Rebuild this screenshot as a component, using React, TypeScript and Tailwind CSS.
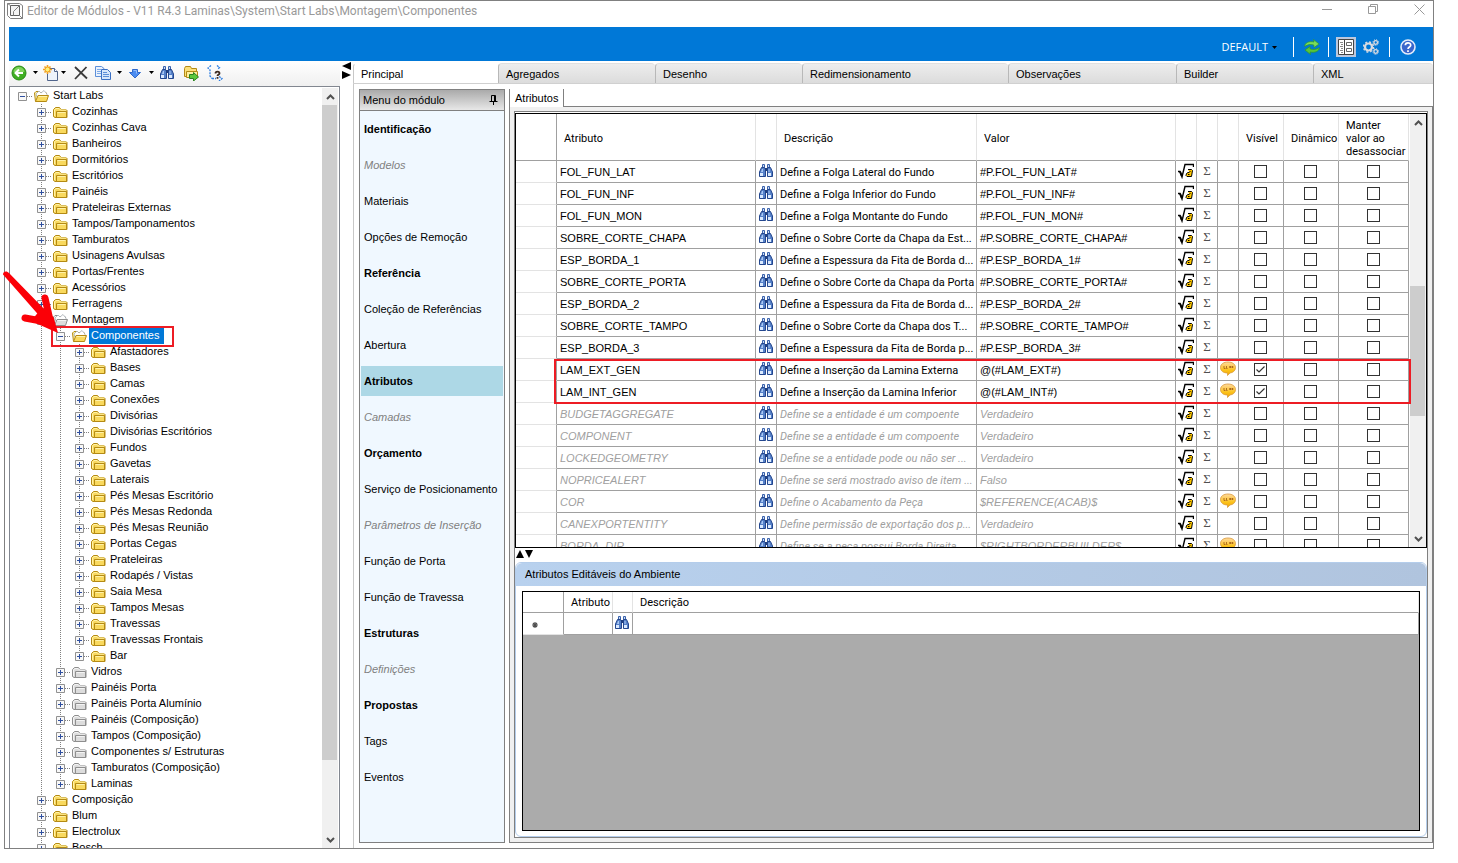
import { useState } from "react";
import type { ReactNode } from "react";

type Tone = "yellow" | "gray";

interface TreeNode {
	label: string;
	level: number;
	tone?: Tone;
	open?: boolean;
	last?: boolean;
}

interface MenuEntry {
	label: string;
	kind?: "group" | "disabled";
}

interface Attribute {
	name: string;
	description: string;
	value: string;
	muted?: boolean;
	note?: boolean;
	visible?: boolean;
}

const node = (level: number, tone: Tone = "yellow") => (label: string): TreeNode => ({
	label,
	level,
	tone,
});

const TREE: TreeNode[] = [
	{ label: "Start Labs", level: 0, open: true },
	...[
		"Cozinhas",
		"Cozinhas Cava",
		"Banheiros",
		"Dormitórios",
		"Escritórios",
		"Painéis",
		"Prateleiras Externas",
		"Tampos/Tamponamentos",
		"Tamburatos",
		"Usinagens Avulsas",
		"Portas/Frentes",
		"Acessórios",
		"Ferragens",
	].map(node(1)),
	{ label: "Montagem", level: 1, tone: "gray", open: true },
	{ label: "Componentes", level: 2, open: true },
	...[
		"Afastadores",
		"Bases",
		"Camas",
		"Conexões",
		"Divisórias",
		"Divisórias Escritórios",
		"Fundos",
		"Gavetas",
		"Laterais",
		"Pés Mesas Escritório",
		"Pés Mesas Redonda",
		"Pés Mesas Reunião",
		"Portas Cegas",
		"Prateleiras",
		"Rodapés / Vistas",
		"Saia Mesa",
		"Tampos Mesas",
		"Travessas",
		"Travessas Frontais",
	].map(node(3)),
	{ label: "Bar", level: 3, last: true },
	...[
		"Vidros",
		"Painéis Porta",
		"Painéis Porta Alumínio",
		"Painéis (Composição)",
		"Tampos (Composição)",
		"Componentes s/ Estruturas",
		"Tamburatos (Composição)",
	].map(node(2, "gray")),
	{ label: "Laminas", level: 2, last: true },
	...["Composição", "Blum", "Electrolux", "Bosch"].map(node(1)),
];

const MENU: MenuEntry[] = [
	{ label: "Identificação", kind: "group" },
	{ label: "Modelos", kind: "disabled" },
	{ label: "Materiais" },
	{ label: "Opções de Remoção" },
	{ label: "Referência", kind: "group" },
	{ label: "Coleção de Referências" },
	{ label: "Abertura" },
	{ label: "Atributos", kind: "group" },
	{ label: "Camadas", kind: "disabled" },
	{ label: "Orçamento", kind: "group" },
	{ label: "Serviço de Posicionamento" },
	{ label: "Parâmetros de Inserção", kind: "disabled" },
	{ label: "Função de Porta" },
	{ label: "Função de Travessa" },
	{ label: "Estruturas", kind: "group" },
	{ label: "Definições", kind: "disabled" },
	{ label: "Propostas", kind: "group" },
	{ label: "Tags" },
	{ label: "Eventos" },
];

const TABS = [
	{ label: "Principal", width: "w-[145px]" },
	{ label: "Agregados", width: "w-[157px]" },
	{ label: "Desenho", width: "w-[147px]" },
	{ label: "Redimensionamento", width: "w-[206px]" },
	{ label: "Observações", width: "w-[168px]" },
	{ label: "Builder", width: "w-[137px]" },
	{ label: "XML", width: "flex-1" },
];

const ATTRIBUTES: Attribute[] = [
	{ name: "FOL_FUN_LAT", description: "Define a Folga Lateral do Fundo", value: "#P.FOL_FUN_LAT#" },
	{ name: "FOL_FUN_INF", description: "Define a Folga Inferior do Fundo", value: "#P.FOL_FUN_INF#" },
	{ name: "FOL_FUN_MON", description: "Define a Folga Montante do Fundo", value: "#P.FOL_FUN_MON#" },
	{ name: "SOBRE_CORTE_CHAPA", description: "Define o Sobre Corte da Chapa da Est...", value: "#P.SOBRE_CORTE_CHAPA#" },
	{ name: "ESP_BORDA_1", description: "Define a Espessura da Fita de Borda d...", value: "#P.ESP_BORDA_1#" },
	{ name: "SOBRE_CORTE_PORTA", description: "Define o Sobre Corte da Chapa da Porta", value: "#P.SOBRE_CORTE_PORTA#" },
	{ name: "ESP_BORDA_2", description: "Define a Espessura da Fita de Borda d...", value: "#P.ESP_BORDA_2#" },
	{ name: "SOBRE_CORTE_TAMPO", description: "Define o Sobre Corte da Chapa dos T...", value: "#P.SOBRE_CORTE_TAMPO#" },
	{ name: "ESP_BORDA_3", description: "Define a Espessura da Fita de Borda p...", value: "#P.ESP_BORDA_3#" },
	{ name: "LAM_EXT_GEN", description: "Define a Inserção da Lamina Externa", value: "@(#LAM_EXT#)", note: true, visible: true },
	{ name: "LAM_INT_GEN", description: "Define a Inserção da Lamina Inferior", value: "@(#LAM_INT#)", note: true, visible: true },
	{ name: "BUDGETAGGREGATE", description: "Define se a entidade é um compoente", value: "Verdadeiro", muted: true },
	{ name: "COMPONENT", description: "Define se a entidade é um compoente", value: "Verdadeiro", muted: true },
	{ name: "LOCKEDGEOMETRY", description: "Define se a entidade pode ou não ser ...", value: "Verdadeiro", muted: true },
	{ name: "NOPRICEALERT", description: "Define se será mostrado aviso de item ...", value: "Falso", muted: true },
	{ name: "COR", description: "Define o Acabamento da Peça", value: "$REFERENCE(ACAB)$", muted: true, note: true },
	{ name: "CANEXPORTENTITY", description: "Define permissão de exportação dos p...", value: "Verdadeiro", muted: true },
	{ name: "BORDA_DIR", description: "Define se a peça possui Borda Direita", value: "$RIGHTBORDERBUILDER$", muted: true, note: true },
];

/* ---------- icons ---------- */

function Binoculars() {
	return (
		<svg width="16" height="16" viewBox="0 0 16 16" className="block">
			<path d="M4.500 1.500h2v3h-2zM9.500 1.500h2v3h-2z" fill="#c9daf4" stroke="#3a62ac" />
			<path d="M3.500 4.500h3l1 2v7h-6V9z" fill="#5580c8" stroke="#23468e" />
			<path d="M9.500 4.500h3l2 4.500v4.500h-5z" fill="#5580c8" stroke="#23468e" />
			<path d="M7 5h2v3H7z" fill="#1f3f80" />
			<path d="M2 10h3v3H2zM10 10h3v3h-3z" fill="#dcebff" />
			<path d="M4 6h1v3H3zM10.500 6h1v3h-1z" fill="#a9c8f4" />
		</svg>
	);
}

function Folder({ tone = "yellow", open }: { tone?: Tone; open?: boolean }) {
	const stroke = tone === "yellow" ? "#b48a14" : "#8e8e8e";
	const fill = tone === "yellow" ? "#f9d95e" : "#dcdcdc";
	const light = tone === "yellow" ? "#fff2a8" : "#f4f4f4";
	return (
		<svg width="19" height="16" viewBox="0 0 19 16" className="block shrink-0">
			{open ? (
				<>
					<path d="M3.500 13.500 2.500 5l1.500-1.500h3l1 1.500h6.500v3" fill={light} stroke={stroke} />
					<path d="m4 6 3-3 2 2 3-2.500 3 3.500v3H5z" fill="#fff" stroke="#9aa0a8" strokeWidth=".7" />
					<path d="M3.500 13.500 6 7.500h10.500l-2 6z" fill={fill} stroke={stroke} strokeLinejoin="round" />
					<path d="M6.500 8.500h8.500" stroke={light} />
				</>
			) : (
				<>
					<path d="M2.500 12.500v-7l2-2h4l1.500 2h5l1 1v7h-12z" fill={fill} stroke={stroke} strokeLinejoin="round" />
					<path d="M3.500 12V6l1.500-1.500h3l1.500 1.500H15" fill="none" stroke={light} />
					<path d="M5.500 7.500h10v6h-10z" fill={fill} stroke={stroke} />
					<path d="M6.500 8.500h8" stroke={light} />
				</>
			)}
		</svg>
	);
}

function RootIcon() {
	return (
		<svg width="16" height="16" viewBox="0 0 16 16" className="block">
			<path d="M0 8.500h2L4 14l3-12.500h8.500V4" fill="none" stroke="#000" strokeWidth="1.400" />
			<path d="m2 8.500 1.800 4.500" stroke="#000" strokeWidth="2" />
			<path d="M10 6.500h3.500l1 1-1 6H9l-1-1 .5-2 1.500-1h1.500" fill="#ffc800" stroke="#000" strokeWidth="1" />
			<path d="M10 11.500h1.500M11.500 8.500h1" stroke="#000" />
		</svg>
	);
}

function NoteIcon() {
	return (
		<svg width="16" height="16" viewBox="0 0 16 16" className="block">
			<defs>
				<linearGradient id="note" x1="0" y1="0" x2="0" y2="1">
					<stop offset="0" stopColor="#ffd9a0" />
					<stop offset=".6" stopColor="#fcc31c" />
					<stop offset="1" stopColor="#f0a800" />
				</linearGradient>
			</defs>
			<path
				d="M8 1c4.300 0 7.500 2.200 7.500 5.500S12.800 11.700 10 12l-2.500 2.500L7.500 12C3.500 12 .5 10 .5 6.500S3.700 1 8 1z"
				fill="url(#note)"
				stroke="#d99a3c"
				strokeWidth=".8"
			/>
			<path d="M4 5v2.500h1.500M6.500 5v2.500h1M9.500 5.500H11v1H9.500zM12 5.500h1v1h-1z" fill="none" stroke="#a8641c" strokeWidth=".9" />
		</svg>
	);
}

function Caret() {
	return (
		<svg width="5" height="3" viewBox="0 0 5 3">
			<path d="M0 0h5L2.500 3z" fill="#000" />
		</svg>
	);
}

function BackIcon() {
	return (
		<svg width="16" height="16" viewBox="0 0 16 16">
			<circle cx="8" cy="8" r="7" fill="#3fae22" stroke="#2a8a16" />
			<path d="M2.500 7a5.500 5 0 0 1 11 0z" fill="#7fd45c" />
			<path d="M12 8H5M8 4.500 4.500 8 8 11.500" fill="none" stroke="#fff" strokeWidth="2" />
		</svg>
	);
}

function NewIcon() {
	return (
		<svg width="16" height="16" viewBox="0 0 16 16" className="shrink-0">
			<path d="M4.500 3.500h7l3 3v9h-10z" fill="#edf3fb" stroke="#51658c" />
			<path d="M11.500 3.500v3h3" fill="#fff" stroke="#51658c" />
			<path d="M4.500 0v9M0 4.500h9M1.500 1.500l6 6M7.500 1.500l-6 6" stroke="#f4a020" strokeWidth="1.600" />
			<circle cx="4.500" cy="4.500" r="2.500" fill="#fff27a" stroke="#f0a020" />
		</svg>
	);
}

function DeleteIcon() {
	return (
		<svg width="16" height="16" viewBox="0 0 16 16">
			<path d="m2 2 12 11.500M13.500 2 2 14" stroke="#3a3a3a" strokeWidth="1.800" />
		</svg>
	);
}

function CopyIcon() {
	return (
		<svg width="16" height="16" viewBox="0 0 16 16">
			<path d="M.5 1.500h6l2.500 2v8H.5z" fill="#eaf2fd" stroke="#5d8fd8" />
			<path d="M2 4.500h4M2 6.500h4M2 8.500h4" stroke="#7eaae6" />
			<path d="M6.500 4.500h6l3 3v7h-9z" fill="#d6e6fb" stroke="#3b70c4" />
			<path d="M8 7.500h4M8 9.500h6M8 11.500h6" stroke="#5d8fd8" />
		</svg>
	);
}

function DownIcon() {
	return (
		<svg width="16" height="16" viewBox="0 0 16 16">
			<path d="M5.500 4.500h5v3h3L8 13 2.500 7.500h3z" fill="#4c8cf0" stroke="#2f68cc" />
			<path d="M6.500 5.500h3v3" fill="none" stroke="#93bcfa" />
		</svg>
	);
}

function FolderGoIcon() {
	return (
		<svg width="16" height="16" viewBox="0 0 16 16">
			<path d="M1.500 11.500v-8l1-2h5l1 2h5v8z" fill="#fbe07a" stroke="#b48a14" />
			<path d="M3.500 6.500h11v6h-11z" fill="#fff0a0" stroke="#b48a14" />
			<path d="M6.500 9.500h4v-2L15.500 12l-5 4v-2.500h-4z" fill="#5cc83c" stroke="#2a8420" />
		</svg>
	);
}

function QueryIcon() {
	return (
		<svg width="16" height="16" viewBox="0 0 16 16">
			<path
				d="M4 .5 1 3l2 2v6l2 2.500M5 13.500h4M10 .5l2.500 2-2 2M12 11.500l3 2-3 2.500"
				fill="none"
				stroke="#2d7de0"
				strokeWidth="1.300"
				strokeDasharray="2 1"
			/>
			<path d="M8.500 8.500c0-2.500 4-2.500 4 0 0 1.300-2 1-2 2.500M10.500 12v1.800" fill="none" stroke="#3c2a20" strokeWidth="1.800" />
		</svg>
	);
}

function RefreshIcon() {
	return (
		<svg width="16" height="16" viewBox="0 0 16 16" className="shrink-0">
			<path d="M.5 7.500C1 3.500 5 2 10 3L9.500.500 15 5l-5 3.500L9.800 6C6 5 4 5.500.5 7.500z" fill="#7bdc5a" stroke="#2e9a2a" strokeWidth=".7" />
			<path d="M15.500 8.500c-.5 4-4.500 5.500-9.500 4.500l.5 2.500L1 11l5-3.500.2 2.500c3.800 1 5.800.5 9.300-1.500z" fill="#58c43c" stroke="#2e9a2a" strokeWidth=".7" />
		</svg>
	);
}

function FormIcon() {
	return (
		<svg width="16" height="16" viewBox="0 0 16 16">
			<path d="M.5.500h15v15H.5z" fill="#fff" stroke="#444" />
			<path d="M6.500.500v15" stroke="#444" />
			<path d="M8.500 3.500h5v3h-5zM8.500 9.500h5v3h-5z" fill="#fff" stroke="#666" />
			<path d="M2 3.500h3M3 5.500h2M2 7.500h3M3 9.500h2M2 11.500h3M3 13.500h2" stroke="#888" />
		</svg>
	);
}

function GearsIcon() {
	return (
		<svg width="16" height="16" viewBox="0 0 16 16" className="shrink-0">
			<circle cx="5.500" cy="8" r="3.500" fill="none" stroke="#dcdce0" strokeWidth="2.200" />
			<circle cx="5.500" cy="8" r="5" fill="none" stroke="#dcdce0" strokeWidth="1.400" strokeDasharray="2 1.927" />
			<circle cx="12.700" cy="3.500" r="1.800" fill="none" stroke="#dcdce0" strokeWidth="1.300" />
			<circle cx="12.700" cy="3.500" r="2.800" fill="none" stroke="#dcdce0" strokeDasharray="1.100 1.099" />
			<circle cx="12.700" cy="12.500" r="1.800" fill="none" stroke="#dcdce0" strokeWidth="1.300" />
			<circle cx="12.700" cy="12.500" r="2.800" fill="none" stroke="#dcdce0" strokeDasharray="1.100 1.099" />
		</svg>
	);
}

function HelpIcon() {
	return (
		<svg width="16" height="16" viewBox="0 0 16 16">
			<circle cx="8" cy="8" r="7" fill="#3a66cc" stroke="#e4ecfa" strokeWidth="1.600" />
			<path d="M5.300 6.300C5.300 3 10.700 3 10.700 6.200 10.700 8 8 8 8 10M8 11.200V13" fill="none" stroke="#fff" strokeWidth="1.700" />
		</svg>
	);
}

function ScrollArrow({ down }: { down?: boolean }) {
	return (
		<svg width="9" height="6" viewBox="0 0 9 6">
			<path d={down ? "m1 1 3.500 3.500L8 1" : "m1 5 3.500-3.500L8 5"} fill="none" stroke="#505050" strokeWidth="2" />
		</svg>
	);
}

/* ---------- shared parts ---------- */

function ToolButton({ label, children }: { label: string; children: ReactNode }) {
	return (
		<button type="button" aria-label={label} className="flex h-5 w-4 shrink-0 items-center justify-center">
			{children}
		</button>
	);
}

function CaretButton({ label, narrow }: { label: string; narrow?: boolean }) {
	return (
		<button
			type="button"
			aria-label={label}
			className={`flex h-5 shrink-0 items-center justify-center ${narrow ? "w-2" : "w-4"}`}
		>
			<Caret />
		</button>
	);
}

function ScrollBar({ thumb }: { thumb: string }) {
	return (
		<div className="flex w-4 shrink-0 flex-col bg-[#f0f0f0]">
			<button type="button" aria-label="Rolar para cima" className="flex h-[17px] shrink-0 items-center justify-center">
				<ScrollArrow />
			</button>
			<div className="min-h-0 flex-1">
				<div className={`w-[15px] bg-[#cdcdcd] ${thumb}`} />
			</div>
			<button type="button" aria-label="Rolar para baixo" className="flex h-[17px] shrink-0 items-center justify-center">
				<ScrollArrow down />
			</button>
		</div>
	);
}

function CheckBox({ label, defaultChecked }: { label: string; defaultChecked?: boolean }) {
	return (
		<span className="mx-auto grid size-[13px]">
			<input
				type="checkbox"
				aria-label={label}
				defaultChecked={defaultChecked}
				className="peer col-start-1 row-start-1 size-[13px] appearance-none border border-[#333] bg-white"
			/>
			<svg
				viewBox="0 0 13 13"
				className="pointer-events-none invisible col-start-1 row-start-1 size-[13px] peer-checked:visible"
			>
				<path d="m2.500 6.500 2.500 2.500 5.500-5.500" fill="none" stroke="#333" strokeWidth="1.200" />
			</svg>
		</span>
	);
}

/* ---------- tree ---------- */

function Guide({ line, box, last, open }: { line: boolean; box?: boolean; last?: boolean; open?: boolean }) {
	return (
		<svg width="19" height="16" viewBox="0 0 19 16" className="block shrink-0">
			{line && <path d={last ? "M9.500 0v8" : "M9.500 0v16"} stroke="#808080" strokeDasharray="1 1" />}
			{box && (
				<>
					<path d="M14 8.500h5" stroke="#808080" strokeDasharray="1 1" />
					<path d="M5.500 4.500h8v8h-8z" fill="#f8f8f8" stroke="#919191" />
					<path d={open ? "M7 8.500h5" : "M7 8.500h5M9.500 6v5"} stroke="#2f4f9f" />
				</>
			)}
		</svg>
	);
}

function TreeRow({ item, selected, onSelect }: { item: TreeNode; selected: boolean; onSelect: () => void }) {
	return (
		<li className="flex h-4">
			{Array.from({ length: item.level }, (_, i) => (
				<Guide key={i} line={i > 0} />
			))}
			<Guide line={item.level > 0} box last={item.last} open={item.open} />
			<Folder tone={item.tone} open={item.open} />
			<button
				type="button"
				onClick={onSelect}
				className={`h-4 whitespace-nowrap pr-1 pl-0.5 pb-0.5 leading-[14px] ${selected ? "bg-[#0078d7] text-white" : ""}`}
			>
				{item.label}
			</button>
		</li>
	);
}

function TreePanel() {
	const [selected, setSelected] = useState("Componentes");

	return (
		<aside className="relative flex w-[331px] shrink-0 flex-col">
			<div className="flex h-[25px] items-center bg-linear-to-b from-white to-[#f0f0f0] pl-0.5 pb-0.5">
				<ToolButton label="Voltar"><BackIcon /></ToolButton>
				<CaretButton label="Histórico" />
				<ToolButton label="Novo"><NewIcon /></ToolButton>
				<CaretButton label="Opções de novo" narrow />
				<div className="ml-1.5 flex gap-1.5">
					<ToolButton label="Excluir"><DeleteIcon /></ToolButton>
					<ToolButton label="Copiar"><CopyIcon /></ToolButton>
				</div>
				<CaretButton label="Opções de cópia" />
				<ToolButton label="Mover"><DownIcon /></ToolButton>
				<CaretButton label="Opções de mover" />
				<div className="flex gap-2">
					<ToolButton label="Procurar"><Binoculars /></ToolButton>
					<ToolButton label="Ir para pasta"><FolderGoIcon /></ToolButton>
					<ToolButton label="Consultar"><QueryIcon /></ToolButton>
				</div>
			</div>
			<div className="flex min-h-0 flex-1 border border-b-0 border-[#828790] bg-white pt-px pr-px">
				<ul className="min-w-0 flex-1 overflow-hidden pl-[3px]">
					{TREE.map((item) => (
						<TreeRow
							key={item.label}
							item={item}
							selected={selected === item.label}
							onSelect={() => setSelected(item.label)}
						/>
					))}
				</ul>
				<ScrollBar thumb="h-[655px]" />
			</div>
			{/* callout around the selected folder */}
			<div className="pointer-events-none absolute top-[265px] left-[42px] h-[21px] w-[123px] border-2 border-[#ed1c24]" />
			<svg
				width="60"
				height="66"
				viewBox="0 0 60 66"
				className="pointer-events-none absolute top-[208px] -left-2"
			>
				<path d="M2 5.500C2 2 6 1.500 8 4l40 41-6 6z" fill="#fb0007" />
				<path d="m44 29 5 22M24 49l22 4" fill="none" stroke="#fb0007" strokeWidth="7" strokeLinecap="round" />
				<path d="m40 40 12.500 8L57 64 30 52z" fill="#fb0007" />
			</svg>
		</aside>
	);
}

/* ---------- module menu ---------- */

function ModuleMenu() {
	const [active, setActive] = useState("Atributos");

	return (
		<nav className="flex w-[146px] shrink-0 flex-col border border-[#808080] bg-[#f0f8ff]">
			<div className="flex h-[21px] shrink-0 items-center justify-between border-b border-[#808080] bg-linear-to-b from-[#aaa] to-[#e8e8e8] pr-1.5 pl-[3px]">
				<span>Menu do módulo</span>
				<button type="button" aria-label="Fixar menu">
					<svg width="9" height="10" viewBox="0 0 9 10">
						<path d="M2.500 6V.5h4V6M.5 6.500h8M4.500 7v3M5.500 1v5" fill="none" stroke="#000" />
					</svg>
				</button>
			</div>
			<ul className="flex flex-col gap-1.5 pt-[3px]">
				{MENU.map((entry) => (
					<li key={entry.label} className="px-px">
						<button
							type="button"
							onClick={() => setActive(entry.label)}
							disabled={entry.kind === "disabled"}
							className={`flex h-[30px] w-full items-center pl-[3px] whitespace-nowrap ${
								entry.kind === "group" ? "font-bold" : ""
							} ${entry.kind === "disabled" ? "italic text-[#808080]" : ""} ${
								active === entry.label ? "bg-[#add8e6]" : ""
							}`}
						>
							{entry.label}
						</button>
					</li>
				))}
			</ul>
		</nav>
	);
}

/* ---------- grids ---------- */

const TABLE = "w-full table-fixed border-separate border-spacing-0";
const NARROW = "font-[Roboto,'Liberation_Sans',sans-serif]";
const TH = `${NARROW} border-r border-b border-r-[#e3e3e3] border-b-[#a0a0a0] pt-0.5 pl-[7px] text-left font-normal`;
const TD = "border-r border-b border-[#a0a0a0]";

function AttributeRow({ row }: { row: Attribute }) {
	const text = `${TD} whitespace-nowrap pl-[3px] ${row.muted ? "italic text-[#a0a0a0]" : ""}`;
	return (
		<tr className="h-[22px]">
			<td className="border-r border-b border-r-[#a0a0a0] border-b-[#e3e3e3]" />
			<td className={text}>{row.name}</td>
			<td className={`${TD} pb-0.5 pl-0.5`}>
				<button type="button" aria-label={`Procurar ${row.name}`} className="block">
					<Binoculars />
				</button>
			</td>
			<td className={`${text} ${NARROW} pt-0.5`}>{row.description}</td>
			<td className={text}>{row.value}</td>
			<td className={`${TD} pb-0.5 pl-0.5`}>
				<button type="button" aria-label={`Fórmula de ${row.name}`} className="block">
					<RootIcon />
				</button>
			</td>
			<td className={`${TD} pb-0.5 text-center font-['Liberation_Serif',serif] text-[13px] leading-4 text-[#505050]`}>Σ</td>
			<td className={`${TD} pb-0.5 pl-0.5`}>{row.note && <NoteIcon />}</td>
			<td className={`${TD} pr-0.5`}><CheckBox label="Visível" defaultChecked={row.visible} /></td>
			<td className={`${TD} pr-0.5`}><CheckBox label="Dinâmico" /></td>
			<td className={TD}><CheckBox label="Manter valor ao desassociar" /></td>
		</tr>
	);
}

function AttributeGrid() {
	return (
		<div className="relative flex h-[435px] shrink-0 border border-black bg-white">
			<div className="min-w-0 flex-1 overflow-hidden pr-px">
				<table className={TABLE}>
					<colgroup>
						<col className="w-[41px]" />
						<col className="w-[199px]" />
						<col className="w-[21px]" />
						<col className="w-[200px]" />
						<col />
						<col className="w-[21px]" />
						<col className="w-[21px]" />
						<col className="w-[21px]" />
						<col className="w-[45px]" />
						<col className="w-[55px]" />
						<col className="w-[70px]" />
					</colgroup>
					<thead>
						<tr className="h-[47px] leading-[13px]">
							<th className="border-r border-b border-[#a0a0a0]" />
							<th className={TH}>Atributo</th>
							<th className={TH} />
							<th className={TH}>Descrição</th>
							<th className={TH}>Valor</th>
							<th className={TH} />
							<th className={TH} />
							<th className={TH} />
							<th className={TH}>Visível</th>
							<th className={TH}>Dinâmico</th>
							<th className={TH}>
								Manter
								<br />
								valor ao
								<br />
								desassociar
							</th>
						</tr>
					</thead>
					<tbody>
						{ATTRIBUTES.map((row) => (
							<AttributeRow key={row.name} row={row} />
						))}
					</tbody>
				</table>
			</div>
			<ScrollBar thumb="mt-[155px] h-[130px]" />
			{/* callout around the two LAM_ rows */}
			<div className="pointer-events-none absolute top-[245px] right-[15px] left-[38px] h-[45px] border-2 border-[#ed1c24]" />
		</div>
	);
}

function EnvironmentGrid() {
	return (
		<section className="flex min-h-0 flex-1 flex-col rounded-md border border-[#b4cdeb] bg-white">
			<h2 className="flex h-[23px] shrink-0 items-center rounded-t-md bg-linear-to-r from-[#b8d1ee] to-[#b0c4de] pb-px pl-[9px]">
				Atributos Editáveis do Ambiente
			</h2>
			<div className="flex min-h-0 flex-1 flex-col px-1.5 pt-[5px] pb-[5px]">
				<div className="min-h-0 flex-1 border border-black bg-[#ababab]">
					<table className={`${TABLE} bg-white`}>
						<colgroup>
							<col className="w-[41px]" />
							<col className="w-[49px]" />
							<col className="w-[20px]" />
							<col />
						</colgroup>
						<thead>
							<tr className="h-[21px]">
								<th className="border-r border-b border-[#a0a0a0]" />
								<th className={TH}>Atributo</th>
								<th className={TH} />
								<th className={TH}>Descrição</th>
							</tr>
						</thead>
						<tbody>
							<tr className="h-[22px]">
								<td className="border-r border-b border-r-[#a0a0a0] border-b-[#e3e3e3] pt-0.5 pl-[9px]">
									<svg width="6" height="6" viewBox="0 0 6 6" className="block">
										<path d="M3 0v6M0 3h6M1 1l4 4M5 1 1 5" stroke="#505050" strokeWidth="1.200" />
									</svg>
								</td>
								<td className={TD} />
								<td className={`${TD} pb-0.5 pl-px`}>
									<button type="button" aria-label="Procurar atributo" className="block">
										<Binoculars />
									</button>
								</td>
								<td className={TD} />
							</tr>
						</tbody>
					</table>
				</div>
			</div>
		</section>
	);
}

/* ---------- window ---------- */

function TitleBar() {
	return (
		<header className="flex h-[26px] shrink-0 items-start justify-between">
			<div className="flex items-center gap-1 pl-0.5">
				<svg width="16" height="18" viewBox="0 0 16 18">
					<path d="M.5 1.500h12l3 2v13h-12l-3-3z" fill="#fff" stroke="#808080" />
					<path d="M3.500 3.500h9v10h-9z" fill="#f4f4f4" stroke="#606060" />
					<path d="M.5 1.500l3 2M12.500 13.500l3 3M12.500 3.500l-6 6v4" fill="none" stroke="#808080" />
				</svg>
				<h1 className="font-[Roboto,'Noto_Sans',sans-serif] text-[12px] leading-5 text-[#999]">
					Editor de Módulos - V11 R4.3 Laminas\System\Start Labs\Montagem\Componentes
				</h1>
			</div>
			<div className="flex gap-[35px] pt-[3px] pr-2">
				<button type="button" aria-label="Minimizar">
					<svg width="11" height="11" viewBox="0 0 11 11"><path d="M0 5.500h10" stroke="#999" /></svg>
				</button>
				<button type="button" aria-label="Restaurar">
					<svg width="11" height="11" viewBox="0 0 11 11">
						<path d="M.5 2.500h7v7h-7zM2.500 2.500v-2h7v7h-2" fill="none" stroke="#999" />
					</svg>
				</button>
				<button type="button" aria-label="Fechar">
					<svg width="11" height="11" viewBox="0 0 11 11"><path d="m.5.500 10 10M10.500.500l-10 10" stroke="#999" /></svg>
				</button>
			</div>
		</header>
	);
}

function CommandBar() {
	return (
		<div className="flex h-[34px] shrink-0 items-center justify-end bg-[#0078d7] pt-1.5 pr-[17px]">
			<button
				type="button"
				className="mr-4 flex items-center gap-1 font-['Open_Sans','Noto_Sans',sans-serif] text-[11px] leading-4 text-white"
			>
				DEFAULT
				<Caret />
			</button>
			<div className="flex items-center border-l border-white pr-2 pl-2.5">
				<ToolButton label="Atualizar"><RefreshIcon /></ToolButton>
			</div>
			<div className="flex items-center gap-[7px] border-l border-white pr-2.5 pl-[7px]">
				<button type="button" aria-label="Formulário" className="flex size-5 items-center justify-center bg-[#bcc8de]">
					<FormIcon />
				</button>
				<ToolButton label="Configurações"><GearsIcon /></ToolButton>
			</div>
			<div className="flex items-center border-l border-white pl-2.5">
				<ToolButton label="Ajuda"><HelpIcon /></ToolButton>
			</div>
		</div>
	);
}

export default function App() {
	const [tab, setTab] = useState("Principal");

	return (
		<div className="h-screen bg-white pr-6 pb-3.5 pl-1 font-['Liberation_Sans',Arial,sans-serif] text-[11px] leading-4 text-black">
			<div className="flex h-full flex-col border border-[#808080] bg-white">
				<TitleBar />
				<div className="flex min-h-0 flex-1 flex-col pl-1">
					<CommandBar />
					<div className="flex min-h-0 flex-1">
						<TreePanel />
						<button type="button" aria-label="Recolher painel" className="flex w-[13px] shrink-0 items-start justify-center pt-px">
							<svg width="9" height="18" viewBox="0 0 9 18">
								<path d="M9 0v8L0 4zM0 9v8l9-4z" fill="#000" />
							</svg>
						</button>
						<main className="flex min-w-0 flex-1 flex-col pt-0.5">
							<div className="flex h-[21px] shrink-0 border-b border-[#d0d0d0]">
								{TABS.map(({ label, width }) => (
									<button
										key={label}
										type="button"
										onClick={() => setTab(label)}
										className={`${width} rounded-t-sm border-t border-l pl-[7px] text-left ${
											tab === label
												? "border-t-white border-l-[#c8c8c8] bg-white"
												: "border-t-[#e0e0e0] border-l-[#b8b8b8] bg-linear-to-b from-[#ededed] to-[#dcdcdc]"
										}`}
									>
										{label}
									</button>
								))}
							</div>
							<div className="flex min-h-0 flex-1 gap-1 border-l border-[#c8c8c8] pt-[5px] pb-[5px] pl-[5px]">
								<ModuleMenu />
								<div className="flex min-w-0 flex-1 flex-col border-l border-[#808080]">
									<div className="flex h-[18px] shrink-0">
										<button type="button" className="w-[54px] border-r border-[#808080] pl-[5px] text-left">
											Atributos
										</button>
										<div className="flex-1 border-b border-[#808080]" />
									</div>
									<div className="flex min-h-0 flex-1 flex-col border-r border-b border-[#808080] bg-[#f0f0f0] p-1">
										<div className="flex min-h-0 flex-1 flex-col border border-[#808080] bg-white pt-px">
											<AttributeGrid />
											<button type="button" aria-label="Redimensionar painéis" className="flex h-3.5 shrink-0 items-start pt-0.5 pl-px">
												<svg width="18" height="8" viewBox="0 0 18 8">
													<path d="M0 8h8L4 0zM9 0h8l-4 8z" fill="#000" />
												</svg>
											</button>
											<EnvironmentGrid />
										</div>
									</div>
								</div>
							</div>
						</main>
					</div>
				</div>
			</div>
		</div>
	);
}
